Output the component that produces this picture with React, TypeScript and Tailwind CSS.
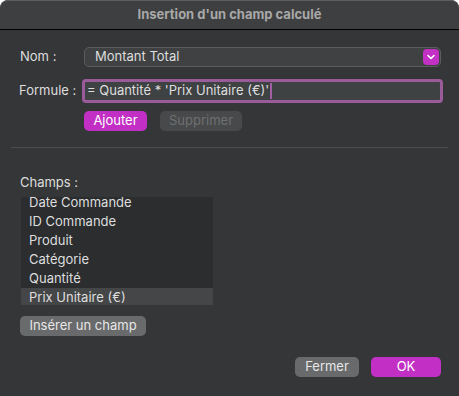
import React from "react";

const rows = ["Date Commande", "ID Commande", "Produit", "Catégorie", "Quantité", "Prix Unitaire (€)"];

export default function App() {
  return (
    <div
      className="w-[459px] h-[396px] bg-[#353638] flex flex-col text-[13px] text-[#dedede] overflow-hidden rounded-t-[8px]"
      style={{ fontFamily: "Inter, 'Noto Sans', sans-serif" }}
    >
      <div className="h-[30px] bg-[#3e3f40] border-t border-[#5c5d5e] border-b border-b-black flex items-center justify-center font-bold text-[#a8a8a8] rounded-t-[8px]">
        Insertion d'un champ calculé
      </div>

      <div className="flex items-center mt-[17px] h-[20px]">
        <div className="w-[84px] pl-[20px]">Nom :</div>
        <div className="w-[357px] h-[20px] bg-[#3f4142] border border-[#5b5c5d] rounded-[5px] flex items-center justify-between pl-[10px] pr-[1px]">
          <span>Montant Total</span>
          <div className="w-[16px] h-[16px] rounded-[4px] bg-[#c230c4] flex items-center justify-center">
            <svg width="8" height="6" viewBox="0 0 8 6">
              <path d="M1 1.5 L4 4.5 L7 1.5" fill="none" stroke="white" strokeWidth="1.6" strokeLinecap="round" strokeLinejoin="round" />
            </svg>
          </div>
        </div>
      </div>

      <div className="flex items-center mt-[12px] h-[24px]">
        <div className="w-[82px] pl-[19px]">Formule :</div>
        <div className="w-[361px] h-[24px] border-[3px] border-[#9a5b9b] rounded-[4px] bg-[#3f4243] flex items-center pl-[2px]">
          <span>= Quantité * 'Prix Unitaire (€)'</span>
          <span className="w-[2px] h-[16px] bg-[#a35fa4] ml-[1px]" />
        </div>
      </div>

      <div className="flex mt-[8px] ml-[84px] gap-[13px]">
        <div className="w-[63px] h-[20px] rounded-[5px] bg-[#c22fc4] flex items-center justify-center text-white">Ajouter</div>
        <div className="w-[82px] h-[20px] rounded-[5px] bg-[#47494a] flex items-center justify-center text-[#6e7071]">Supprimer</div>
      </div>

      <div className="mt-[16px] mx-[11px] h-px bg-[#4b4c4e]" />

      <div className="mt-[26px] pl-[20px] h-[16px] leading-[16px]">Champs :</div>

      <div className="mt-[7px] ml-[21px] w-[192px] h-[108px] bg-[#2b2d2f] overflow-hidden">
        <div className="mt-[-4px]">
          {rows.map((r, i) => (
            <div
              key={r}
              className={`h-[19px] leading-[19px] pl-[8px] ${i === rows.length - 1 ? "bg-[#454647]" : ""}`}
            >
              {r}
            </div>
          ))}
        </div>
      </div>

      <div className="mt-[11px] ml-[20px] w-[126px] h-[20px] rounded-[5px] bg-[#696a6b] flex items-center justify-center text-[#e6e6e6]">
        Insérer un champ
      </div>

      <div className="flex justify-end mt-[21px] mr-[18px] gap-[12px]">
        <div className="w-[64px] h-[20px] rounded-[5px] bg-[#696a6b] flex items-center justify-center text-[#e6e6e6]">Fermer</div>
        <div className="w-[70px] h-[20px] rounded-[5px] bg-[#c22fc4] flex items-center justify-center text-white">OK</div>
      </div>
    </div>
  );
}
